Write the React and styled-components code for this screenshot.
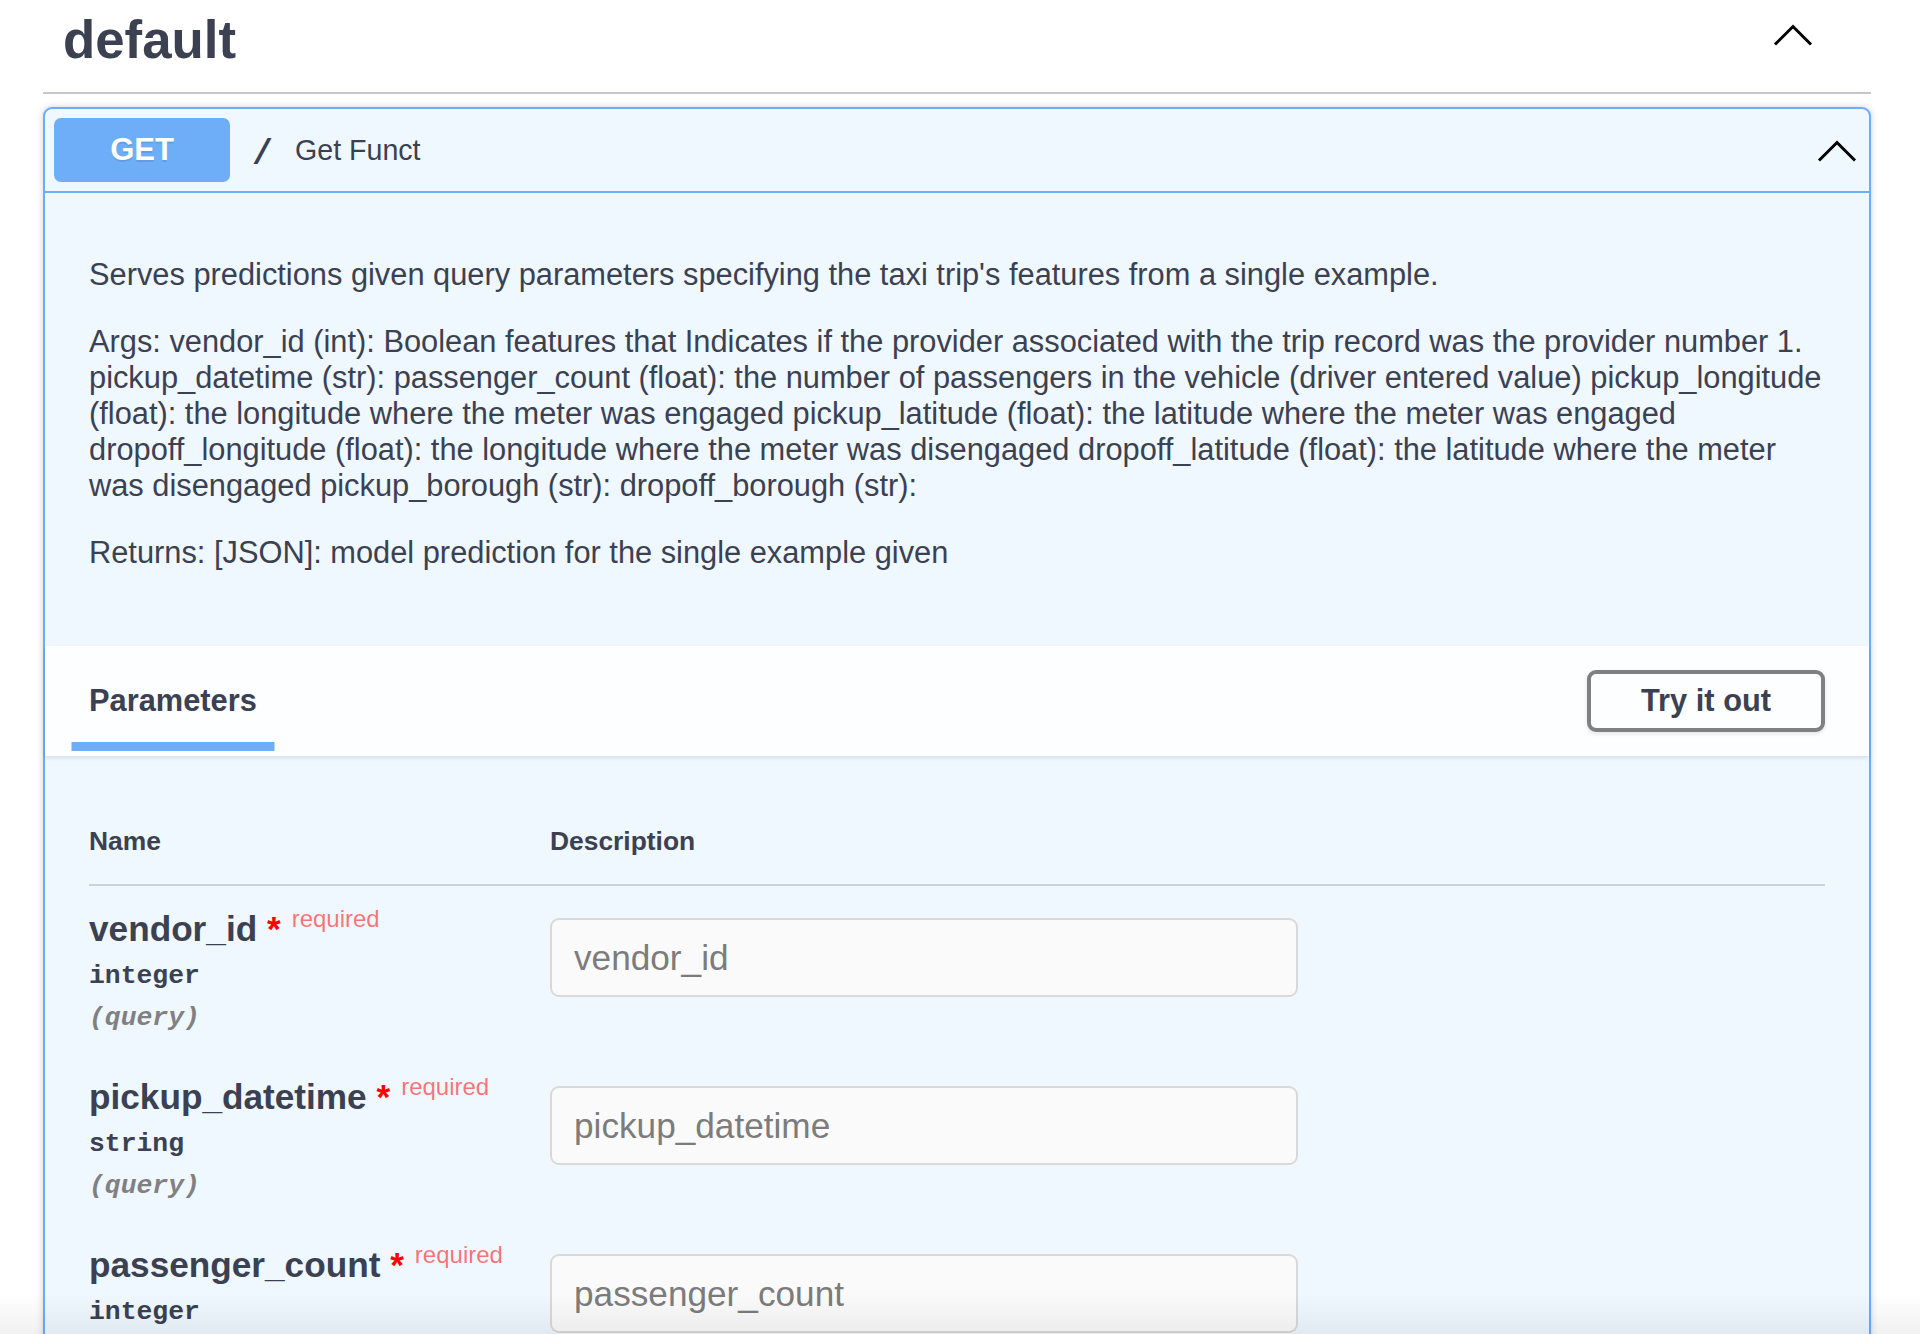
import React from "react";
import styled, { createGlobalStyle } from "styled-components";

const GlobalStyle = createGlobalStyle`
  html, body { margin: 0; padding: 0; background: #ffffff; }
  body { font-family: "Liberation Sans", Arial, Helvetica, sans-serif; color: #3b4151; }
  * { box-sizing: border-box; }
`;

const Page = styled.div`
  padding: 0 49px 0 43px;
`;

const TagHeader = styled.h3`
  display: flex;
  align-items: center;
  margin: 0 0 13px;
  padding: 10px 58px 23px 20px;
  border-bottom: 2px solid #c4c6cb;
  font-size: 52.8px;
  line-height: 59px;
  font-weight: 700;
  color: #3b4151;
`;

const TagName = styled.span`
  flex: 1;
`;

const Chevron = styled.svg`
  display: block;
  flex: none;
  margin-bottom: ${(p) => p.$lift || 0}px;
`;

const ChevronUp = ({ lift }) => (
  <Chevron $lift={lift} width="40" height="22" viewBox="0 0 40 22">
    <polyline points="2,20.5 20,2.5 38,20.5" fill="none" stroke="#000" strokeWidth="3" />
  </Chevron>
);

const OpBlock = styled.div`
  border: 2px solid #6cacf8;
  border-radius: 9px;
  background: #eff7ff;
  box-shadow: 0 0 7px rgba(0, 0, 0, 0.19);
`;

const Summary = styled.div`
  display: flex;
  align-items: center;
  padding: 9px 12px 9px 9px;
  border-bottom: 2px solid #6cacf8;
`;

const MethodBadge = styled.span`
  display: flex;
  align-items: center;
  justify-content: center;
  width: 176px;
  height: 64px;
  border-radius: 7px;
  background: #6eaef8;
  color: #fff;
  font-size: 31px;
  font-weight: 700;
  text-shadow: 0 2px 0 rgba(0, 0, 0, 0.1);
`;

const PathText = styled.span`
  padding: 9px 22px 0;
  font-family: "Liberation Mono", "DejaVu Sans Mono", monospace;
  font-size: 35px;
  font-weight: 700;
  color: #3b4151;
`;

const SummaryDesc = styled.span`
  flex: 1;
  font-size: 28.6px;
  color: #3b4151;
`;

const DescriptionWrapper = styled.div`
  padding: 33px 44px 33px;
  margin-bottom: 11px;
`;

const Para = styled.p`
  margin: 31px 0;
  font-size: 30.8px;
  line-height: 36px;
  color: #3b4151;
  white-space: nowrap;
`;

const SectionHeader = styled.div`
  display: flex;
  align-items: center;
  height: 110px;
  padding: 0 44px;
  background: rgba(255, 255, 255, 0.8);
  box-shadow: 0 2px 4px rgba(0, 0, 0, 0.1);
`;

const TabTitle = styled.h4`
  flex: 1;
  margin: 0;
  font-size: 30.8px;
  line-height: 36px;
  font-weight: 700;
  color: #3b4151;
`;

const TabLabel = styled.span`
  position: relative;
  &::after {
    content: "";
    position: absolute;
    left: 50%;
    bottom: -33px;
    transform: translateX(-50%);
    width: 121%;
    height: 9px;
    background: #6eaef8;
  }
`;

const TryButton = styled.button`
  width: 238px;
  height: 62px;
  border: 4px solid #808080;
  border-radius: 9px;
  background: transparent;
  box-shadow: 0 2px 4px rgba(0, 0, 0, 0.1);
  font-family: "Liberation Sans", Arial, sans-serif;
  font-size: 30.8px;
  font-weight: 700;
  color: #3b4151;
  padding: 0;
`;

const TableContainer = styled.div`
  padding: 46px 44px 0;
`;

const Row = styled.div`
  display: grid;
  grid-template-columns: 461px 1fr;
`;

const HeaderRow = styled(Row)`
  padding: 26px 0 30px;
  border-bottom: 2px solid rgba(59, 65, 81, 0.2);
  font-size: 26.4px;
  line-height: 26px;
  font-weight: 700;
  color: #3b4151;
`;

const NameCell = styled.div`
  padding: 23px 0 21px;
`;

const DescCell = styled.div`
  padding-top: 21px;
`;

const ParamName = styled.div`
  font-size: 35.2px;
  line-height: 40px;
  font-weight: 700;
  color: #3b4151;
  white-space: nowrap;
`;

const Star = styled.span`
  color: #ff0000;
`;

const Required = styled.span`
  position: relative;
  top: -14px;
  padding: 0 11px;
  font-size: 24px;
  line-height: 0;
  font-weight: 400;
  color: rgba(255, 0, 0, 0.55);
`;

const ParamType = styled.div`
  padding: 12px 0;
  font-family: "Liberation Mono", "DejaVu Sans Mono", monospace;
  font-size: 26.4px;
  line-height: 30px;
  font-weight: 700;
  color: #3b4151;
`;

const ParamIn = styled.div`
  font-family: "Liberation Mono", "DejaVu Sans Mono", monospace;
  font-size: 26.4px;
  line-height: 30px;
  font-weight: 700;
  font-style: italic;
  color: #808080;
`;

const ParamInput = styled.input`
  display: block;
  width: 748px;
  height: 79px;
  margin: 11px 0;
  padding: 0 22px;
  border: 2px solid #d9d9d9;
  border-radius: 9px;
  background: #fafafa;
  font-family: "Liberation Sans", Arial, sans-serif;
  font-size: 35.2px;
  color: #7c7c7c;
  &::placeholder { color: #7c7c7c; opacity: 1; }
`;

const BottomFade = styled.div`
  position: fixed;
  left: 0;
  right: 0;
  bottom: 0;
  height: 40px;
  pointer-events: none;
  background: linear-gradient(to bottom, rgba(0, 0, 0, 0), rgba(0, 0, 0, 0.055));
`;

const params = [
  { name: "vendor_id", type: "integer" },
  { name: "pickup_datetime", type: "string" },
  { name: "passenger_count", type: "integer" },
  { name: "pickup_longitude", type: "number" },
];

const argLines = [
  "Args: vendor_id (int): Boolean features that Indicates if the provider associated with the trip record was the provider number 1.",
  "pickup_datetime (str): passenger_count (float): the number of passengers in the vehicle (driver entered value) pickup_longitude",
  "(float): the longitude where the meter was engaged pickup_latitude (float): the latitude where the meter was engaged",
  "dropoff_longitude (float): the longitude where the meter was disengaged dropoff_latitude (float): the latitude where the meter",
  "was disengaged pickup_borough (str): dropoff_borough (str):",
];

export default function App() {
  return (
    <>
      <GlobalStyle />
      <Page>
        <TagHeader>
          <TagName>default</TagName>
          <ChevronUp lift={10} />
        </TagHeader>
        <OpBlock>
          <Summary>
            <MethodBadge>GET</MethodBadge>
            <PathText>/</PathText>
            <SummaryDesc>Get Funct</SummaryDesc>
            <ChevronUp lift={-2} />
          </Summary>
          <DescriptionWrapper>
            <Para>
              Serves predictions given query parameters specifying the taxi trip's features from a single example.
            </Para>
            <Para>
              {argLines.map((l, i) => (
                <React.Fragment key={i}>
                  {l}
                  {i < argLines.length - 1 && <br />}
                </React.Fragment>
              ))}
            </Para>
            <Para>Returns: [JSON]: model prediction for the single example given</Para>
          </DescriptionWrapper>
          <SectionHeader>
            <TabTitle>
              <TabLabel>Parameters</TabLabel>
            </TabTitle>
            <TryButton>Try it out</TryButton>
          </SectionHeader>
          <TableContainer>
            <HeaderRow>
              <div>Name</div>
              <div>Description</div>
            </HeaderRow>
            {params.map((p) => (
              <Row key={p.name}>
                <NameCell>
                  <ParamName>
                    {p.name}
                    <Star>&nbsp;*</Star>
                    <Required>required</Required>
                  </ParamName>
                  <ParamType>{p.type}</ParamType>
                  <ParamIn>(query)</ParamIn>
                </NameCell>
                <DescCell>
                  <ParamInput placeholder={p.name} disabled />
                </DescCell>
              </Row>
            ))}
          </TableContainer>
        </OpBlock>
      </Page>
      <BottomFade />
    </>
  );
}
